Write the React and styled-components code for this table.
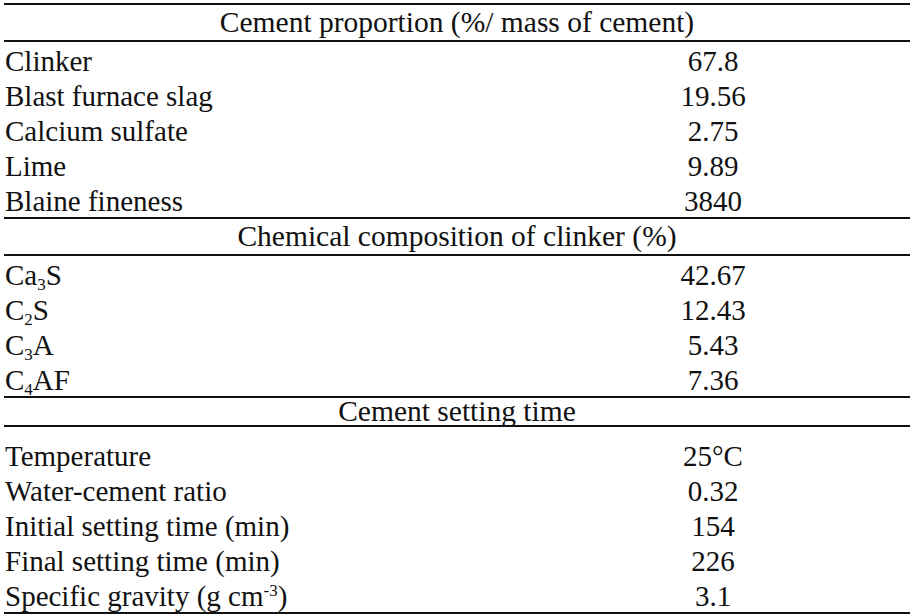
import React from "react";
import styled, { createGlobalStyle } from "styled-components";

const GlobalStyle = createGlobalStyle`
  html, body {
    margin: 0;
    padding: 0;
    background: #fff;
  }
`;

const Page = styled.div`
  padding: 3px 4px 0 4px;
  width: 906px;
  font-family: "Liberation Serif", "Times New Roman", serif;
  color: #111;
`;

const Table = styled.div`
  border-top: 2px solid #111;
  border-bottom: 2px solid #111;
`;

const SectionHead = styled.div`
  height: ${(p) => p.$h || 35}px;
  line-height: ${(p) => p.$h || 35}px;
  font-size: 29.5px;
  text-align: center;
  border-bottom: 2px solid #111;
  border-top: ${(p) => (p.$first ? "none" : "2px solid #111")};
  white-space: nowrap;
`;

const Rows = styled.div`
  padding-top: ${(p) => p.$pt || 0}px;
`;

const Row = styled.div`
  display: grid;
  grid-template-columns: 512px 1fr;
  height: 33px;
  padding-top: 2px;
  line-height: 35px;
  font-size: 29px;
`;

const Label = styled.div`
  padding-left: 1px;
  white-space: nowrap;
`;

const Value = styled.div`
  text-align: center;
  white-space: nowrap;
`;

const Sub = styled.sub`
  font-size: 17px;
  line-height: 0;
  vertical-align: -5px;
`;

const Sup = styled.sup`
  font-size: 17px;
  line-height: 0;
  vertical-align: 10px;
`;

const sections = [
  {
    title: "Cement proportion (%/ mass of cement)",
    rows: [
      ["Clinker", "67.8"],
      ["Blast furnace slag", "19.56"],
      ["Calcium sulfate", "2.75"],
      ["Lime", "9.89"],
      ["Blaine fineness", "3840"],
    ],
  },
  {
    title: "Chemical composition of clinker (%)",
    rows: [
      [<>Ca<Sub>3</Sub>S</>, "42.67"],
      [<>C<Sub>2</Sub>S</>, "12.43"],
      [<>C<Sub>3</Sub>A</>, "5.43"],
      [<>C<Sub>4</Sub>AF</>, "7.36"],
    ],
  },
  {
    title: "Cement setting time",
    headHeight: 27,
    padTop: 10,
    rows: [
      ["Temperature", "25°C"],
      ["Water-cement ratio", "0.32"],
      ["Initial setting time (min)", "154"],
      ["Final setting time (min)", "226"],
      [<>Specific gravity (g cm<Sup>-3</Sup>)</>, "3.1"],
    ],
  },
];

const App = () => {
  return (
    <>
      <GlobalStyle />
      <Page>
        <Table>
          {sections.map((s, i) => (
            <React.Fragment key={i}>
              <SectionHead $first={i === 0} $h={s.headHeight}>
                {s.title}
              </SectionHead>
              <Rows $pt={s.padTop}>
                {s.rows.map((r, j) => (
                  <Row key={j}>
                    <Label>{r[0]}</Label>
                    <Value>{r[1]}</Value>
                  </Row>
                ))}
              </Rows>
            </React.Fragment>
          ))}
        </Table>
      </Page>
    </>
  );
};

export default App;
